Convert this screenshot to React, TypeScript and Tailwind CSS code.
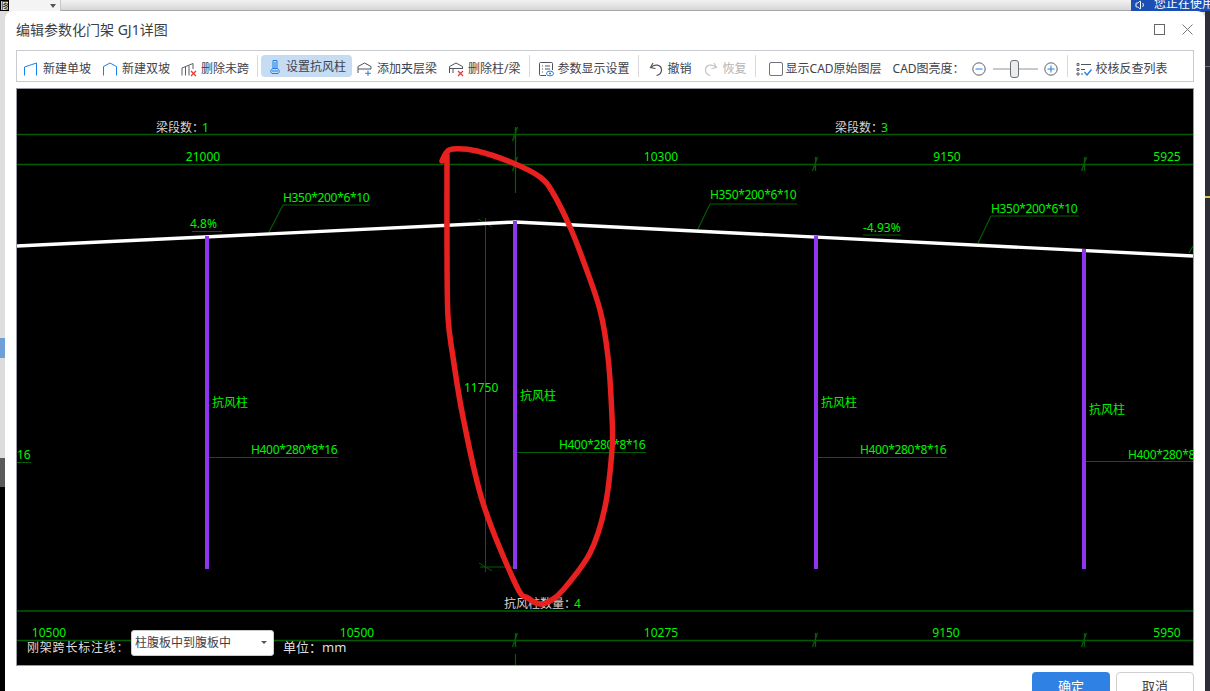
import type { ReactNode } from 'react'
import { Volume1 } from 'lucide-react'

const GREEN = '#00f400'
const LINE = '#045c04'

// hand traced pen stroke over the drawing
const penStroke: [number, number][] = [
  [442, 161], [446, 153], [453, 149], [477, 151], [513, 163], [540, 177], [553, 193], [570, 227],
  [583, 260], [600, 310], [608, 357], [612, 417], [612, 450], [605, 507], [590, 553], [563, 590],
  [550, 601], [540, 604], [528, 598], [516, 585], [483, 503], [463, 417], [453, 357], [448, 317],
  [447, 250], [447, 155],
]

function smoothPath(pts: [number, number][]) {
  let d = `M${pts[0][0]} ${pts[0][1]}`
  for (let i = 0; i < pts.length - 1; i++) {
    const p0 = pts[Math.max(i - 1, 0)]
    const p1 = pts[i]
    const p2 = pts[i + 1]
    const p3 = pts[Math.min(i + 2, pts.length - 1)]
    const c1x = p1[0] + (p2[0] - p0[0]) / 6
    const c1y = p1[1] + (p2[1] - p0[1]) / 6
    const c2x = p2[0] - (p3[0] - p1[0]) / 6
    const c2y = p2[1] - (p3[1] - p1[1]) / 6
    d += ` C${c1x} ${c1y} ${c2x} ${c2y} ${p2[0]} ${p2[1]}`
  }
  return d
}

function Icon({ children, className = '' }: { children: ReactNode; className?: string }) {
  return (
    <svg viewBox="0 0 16 16" fill="none" strokeWidth={1} className={`w-4 h-4 shrink-0 ${className}`}>
      {children}
    </svg>
  )
}

function ToolItem({ icon, label, className = '', disabled }: { icon: ReactNode; label: string; className?: string; disabled?: boolean }) {
  return (
    <div className={`flex items-center gap-[4px] shrink-0 ${disabled ? 'text-[#b4b4b4]' : 'text-[#3f424a]'} ${className}`}>
      {icon}
      <span className="whitespace-nowrap">{label}</span>
    </div>
  )
}

function Sep({ className = '' }: { className?: string }) {
  return <div className={`w-px h-[22px] bg-[#d9d9dc] shrink-0 ${className}`} />
}

function Label({ x, y, text, n }: { x: number; y: number; text: string; n: string }) {
  return (
    <text x={x} y={y} fontSize={12} fill="#d6d6d6">
      {text}
      <tspan fill={GREEN} dx={-2}>{n}</tspan>
    </text>
  )
}

function G({ x, y, children, anchor = 'start', tight }: { x: number; y: number; children: string; anchor?: 'start' | 'middle'; tight?: boolean }) {
  return (
    <text x={x} y={y} fontSize={12} fill={GREEN} textAnchor={anchor} letterSpacing={tight ? -0.32 : 0}>
      {children}
    </text>
  )
}

function Tick({ x, y }: { x: number; y: number }) {
  return (
    <path d={`M${x - 2.5} ${y + 7}L${x + 2.5} ${y - 7}M${x + 0.5} ${y - 7}V${y + 7}`} stroke={LINE} strokeWidth={1.3} />
  )
}

function Drawing() {
  return (
    <svg viewBox="17 89 1176 576" className="absolute inset-0 w-[1176px] h-[576px]">
      <g stroke={LINE} fill="none">
        <path d="M17 134.5H1193M17 164.5H1193M17 611H1193M17 640.5H1193" strokeWidth={1.6} />
        <path d="M515.5 128V193M515.5 635V647M515.5 654V665" strokeWidth={1.2} />
        <path d="M485.5 218V572M480 567H515" />
        <path d="M480 222.5H515" stroke="#1c8a1c" />
        <path d="M478 219L492 227M479 563L492 571" />
        <path d="M269 232L283 205H370M192 231.5H222M697 231L710 204H797M978 243L991 216H1079M863 235H901M1189 253L1193 246" strokeWidth={1.2} />
        <path d="M207 457.5H338M515 452.5H646M816 457.5H947M1084 461.5H1193M17 462.5H31" />
      </g>
      <Tick x={515} y={134} />
      <Tick x={515} y={164} />
      <Tick x={815} y={164} />
      <Tick x={1084} y={164} />
      <Tick x={515} y={640} />
      <Tick x={815} y={640} />
      <Tick x={1084} y={640} />

      <path d="M17 246L515 222L1193 256" stroke="#fff" strokeWidth={3.4} fill="none" />
      <g fill="#8f35f0">
        <rect x={205} y={236} width={4} height={333} />
        <rect x={513} y={221} width={4} height={348} />
        <rect x={814} y={236} width={4} height={333} />
        <rect x={1082} y={249} width={4} height={320} />
      </g>

      <Label x={156} y={132} text="梁段数：" n="1" />
      <Label x={835} y={132} text="梁段数：" n="3" />
      <Label x={504} y={608} text="抗风柱数量：" n="4" />

      <G x={203} y={161} anchor="middle">21000</G>
      <G x={661} y={161} anchor="middle">10300</G>
      <G x={947} y={161} anchor="middle">9150</G>
      <G x={1167} y={161} anchor="middle">5925</G>
      <G x={49} y={637} anchor="middle">10500</G>
      <G x={357} y={637} anchor="middle">10500</G>
      <G x={661} y={637} anchor="middle">10275</G>
      <G x={946} y={637} anchor="middle">9150</G>
      <G x={1167} y={637} anchor="middle">5950</G>

      <G x={283} y={202} tight>H350*200*6*10</G>
      <G x={710} y={199} tight>H350*200*6*10</G>
      <G x={991} y={213} tight>H350*200*6*10</G>
      <G x={190} y={228}>4.8%</G>
      <G x={863} y={232}>-4.93%</G>
      <G x={464} y={392}>11750</G>

      <G x={212} y={407}>抗风柱</G>
      <G x={520} y={400}>抗风柱</G>
      <G x={821} y={407}>抗风柱</G>
      <G x={1089} y={414}>抗风柱</G>

      <G x={251} y={454} tight>H400*280*8*16</G>
      <G x={559} y={449} tight>H400*280*8*16</G>
      <G x={860} y={454} tight>H400*280*8*16</G>
      <G x={1128} y={459} tight>H400*280*8*16</G>
      <G x={17} y={459}>16</G>

      <path d={smoothPath(penStroke)} stroke="#e8201f" strokeWidth={5.5} strokeLinecap="round" strokeLinejoin="round" fill="none" />
    </svg>
  )
}

function Toolbar() {
  return (
    <div className="h-8 border border-[#c9c9d0] flex items-center pt-[5px] text-xs leading-none shrink-0">
      <ToolItem
        className="ml-[6px]"
        label="新建单坡"
        icon={
          <Icon>
            <path d="M1.5 14.5V6L13.5 2" stroke="#1a7fe8" />
            <path d="M13.5 2V14.5" stroke="#1a7fe8" />
          </Icon>
        }
      />
      <ToolItem
        className="ml-[11px]"
        label="新建双坡"
        icon={
          <Icon>
            <path d="M1.5 14.5V5.5L8 2L14.5 5.5V14.5" stroke="#1a7fe8" />
          </Icon>
        }
      />
      <ToolItem
        className="ml-[11px]"
        label="删除未跨"
        icon={
          <Icon>
            <path d="M1 14.5V7L12 2.5V8M4.5 14.5V6M8 14.5V4.5" stroke="#5a5e66" />
            <path d="M10 10L15 15M15 10L10 15" stroke="#e5383b" strokeWidth={1.3} />
          </Icon>
        }
      />
      <Sep className="ml-[8px] mt-[-5px]" />
      <div className="ml-[3px] mt-[-5px] w-[91px] h-[22px] rounded bg-[#c5dcf3] flex items-center gap-[3px] pl-[6px] pt-[1px] text-[#3f424a] shrink-0">
        <Icon>
          <path d="M6 1.5H10V9.5H6ZM8 3V9" stroke="#1a7fe8" />
          <path d="M6 9.5C3.5 10.5 3 13 5 14.5H11C13 13 12.5 10.5 10 9.5M5 12H11" stroke="#1a7fe8" />
        </Icon>
        <span>设置抗风柱</span>
      </div>
      <ToolItem
        className="ml-[5px]"
        label="添加夹层梁"
        icon={
          <Icon>
            <path d="M1 12V5.5L7.5 2L14 5.5V8M1 8H14" stroke="#50545c" />
            <path d="M11 9.5V15M8.2 12.3H13.8" stroke="#1a7fe8" />
          </Icon>
        }
      />
      <ToolItem
        className="ml-[11px]"
        label="删除柱/梁"
        icon={
          <Icon>
            <path d="M1.5 12V5.5L8 2L14.5 5.5V8M1.5 7.5H14.5M5 7.5V12" stroke="#50545c" />
            <path d="M10 10L15 15M15 10L10 15" stroke="#e5383b" strokeWidth={1.3} />
          </Icon>
        }
      />
      <Sep className="ml-[8px] mt-[-5px]" />
      <ToolItem
        className="ml-[8px]"
        label="参数显示设置"
        icon={
          <Icon>
            <path d="M8 14.5H2.5A1 1 0 0 1 1.5 13.5V2.5A1 1 0 0 1 2.5 1.5H13.5A1 1 0 0 1 14.5 2.5V9" stroke="#50545c" />
            <path d="M4 5H5M7 5H12M4 8H5M7 8H12M4 11H5" stroke="#50545c" />
            <ellipse cx={12} cy={12.5} rx={3.5} ry={2.4} stroke="#1a7fe8" />
            <circle cx={12} cy={12.5} r={1} fill="#1a7fe8" />
          </Icon>
        }
      />
      <Sep className="ml-[8px] mt-[-5px]" />
      <ToolItem
        className="ml-[9px]"
        label="撤销"
        icon={
          <Icon>
            <path d="M5 2L2.5 6.5L7.5 7.5" stroke="#50545c" strokeWidth={1.2} />
            <path d="M3 6.5C6 2.5 13.5 3.5 13.5 9C13.5 12 11 14 8.5 14.5" stroke="#50545c" strokeWidth={1.2} />
          </Icon>
        }
      />
      <ToolItem
        className="ml-[11px]"
        disabled
        label="恢复"
        icon={
          <Icon>
            <path d="M11 2L13.5 6.5L8.5 7.5" stroke="#c4c4c4" strokeWidth={1.2} />
            <path d="M13 6.5C10 2.5 2.5 3.5 2.5 9C2.5 12 5 14 7.5 14.5" stroke="#c4c4c4" strokeWidth={1.2} />
          </Icon>
        }
      />
      <Sep className="ml-[8px] mt-[-5px]" />
      <div className="ml-[13px] w-[14px] h-[14px] rounded-[2px] border border-[#70737a] bg-white shrink-0" />
      <span className="ml-[3px] text-[#3f424a] whitespace-nowrap">显示CAD原始图层</span>
      <span className="ml-[11px] text-[#3f424a] whitespace-nowrap">CAD图亮度：</span>
      <svg viewBox="0 0 14 14" className="ml-[7px] w-[14px] h-[14px] shrink-0" fill="none">
        <circle cx={7} cy={7} r={6.2} stroke="#5a5e66" />
        <path d="M3.5 7H10.5" stroke="#1a7fe8" />
      </svg>
      <div className="ml-[7px] w-[45px] h-[2px] bg-[#c9c9c9] relative shrink-0">
        <div className="absolute left-[17px] top-[-8px] w-[9px] h-[18px] rounded-[3px] border border-[#6b6f78] bg-[#ececec]" />
      </div>
      <svg viewBox="0 0 14 14" className="ml-[6px] w-[14px] h-[14px] shrink-0" fill="none">
        <circle cx={7} cy={7} r={6.2} stroke="#5a5e66" />
        <path d="M3.5 7H10.5M7 3.5V10.5" stroke="#1a7fe8" />
      </svg>
      <Sep className="ml-[9px] mt-[-5px]" />
      <ToolItem
        className="ml-[8px]"
        label="校核反查列表"
        icon={
          <Icon>
            <path d="M1 2.5H3V4.5H1ZM1 7.5H3V9.5H1ZM1 12H3V14H1Z" stroke="#50545c" strokeWidth={0.9} />
            <path d="M5 3.5H15M5 8.5H9M5 13H7" stroke="#50545c" />
            <path d="M8.5 11L11 14L15.5 8.5" stroke="#1a7fe8" strokeWidth={1.3} />
          </Icon>
        }
      />
    </div>
  )
}

export default function App() {
  return (
    <div className="relative w-[1210px] h-[691px] overflow-hidden bg-[#dcdcdc] font-['Noto_Sans','Noto_Sans_CJK_SC',sans-serif]">
      {/* app behind the dialog */}
      <div className="absolute top-0 left-0 right-0 h-[11px] bg-gradient-to-b from-[#f2f2f2] to-[#d6d6d6] border-b border-[#a9a9a9] flex items-start">
        <div className="w-[9px] h-[11px] border border-black bg-[#efe6c8] text-[10px] leading-[10px] overflow-hidden text-[#222]">图</div>
        <div className="w-[52px] h-[11px] bg-[#f4f4f4] border-r border-[#c8c8c8] relative">
          <div className="absolute right-[4px] top-[4px] border-x-[3px] border-x-transparent border-t-[4px] border-t-[#555]" />
        </div>
      </div>
      <div className="absolute left-[1131px] top-0 w-[79px] h-[12px] bg-[#1c4fb4] text-white text-xs leading-[10px] flex items-start gap-[7px] pl-[4px] overflow-hidden whitespace-nowrap">
        <Volume1 size={12} className="shrink-0 mt-[-1px]" />
        <span className="mt-[-1px]">您正在使用</span>
      </div>
      <div className="absolute left-0 top-[11px] bottom-0 w-[5px] flex flex-col">
        <div className="h-[327px] bg-[#dedede]" />
        <div className="h-[20px] bg-[#6f9fd6]" />
        <div className="h-[100px] bg-[#dcdcdc]" />
        <div className="h-[29px] bg-[#5a5a5a]" />
        <div className="flex-1 bg-black" />
      </div>
      <div className="absolute right-0 top-[11px] bottom-0 w-[5px] flex flex-col bg-[#2c3036]">
        <div className="h-[55px]" />
        <div className="h-px bg-[#6b6f75]" />
        <div className="h-[129px]" />
        <div className="h-[2px] bg-[#e2c83c]" />
      </div>

      {/* dialog */}
      <div className="absolute left-[5px] top-[11px] w-[1200px] h-[700px] bg-white rounded-t-lg px-[11px] flex flex-col font-['Noto_Sans','Noto_Sans_CJK_SC',sans-serif]">
        <div className="h-[39px] shrink-0 flex items-center justify-between">
          <span className="text-sm leading-none text-[#3c3f46] mt-[-1px]">编辑参数化门架 GJ1详图</span>
          <div className="flex items-center gap-[17px] mr-[1px] mt-[-2px]">
            <div className="w-[11px] h-[11px] border border-[#666]" />
            <svg viewBox="0 0 11 11" className="w-[11px] h-[11px]" fill="none">
              <path d="M0.5 0.5L10.5 10.5M10.5 0.5L0.5 10.5" stroke="#777" />
            </svg>
          </div>
        </div>
        <Toolbar />
        <div className="relative mt-[6px] h-[578px] shrink-0 bg-black border border-[#9a9aa4]">
          <Drawing />
          <div className="absolute left-[10px] bottom-[9px] flex items-center text-[13px] leading-none text-[#dedede]">
            <span className="w-[104px] whitespace-nowrap text-xs mt-[11px] tracking-[0.8px]">刚架跨长标注线：</span>
            <div className="w-[143px] h-[26px] bg-white rounded-[3px] border border-[#ccc] flex items-center justify-between px-[3px] text-xs text-[#3f424a]">
              <span>柱腹板中到腹板中</span>
              <div className="mr-[3px] border-x-[3px] border-x-transparent border-t-[3px] border-t-[#555]" />
            </div>
            <span className="ml-[9px] mt-[9px]">单位：mm</span>
          </div>
        </div>
        <div className="mt-[6px] flex justify-end gap-[6px] text-[13px]">
          <div className="w-[78px] h-[30px] rounded-[4px] bg-[#2f82e4] text-white flex items-center justify-center">确定</div>
          <div className="w-[78px] h-[30px] rounded-[4px] border border-[#cfcfcf] text-[#3c3f46] flex items-center justify-center">取消</div>
        </div>
      </div>
    </div>
  )
}
